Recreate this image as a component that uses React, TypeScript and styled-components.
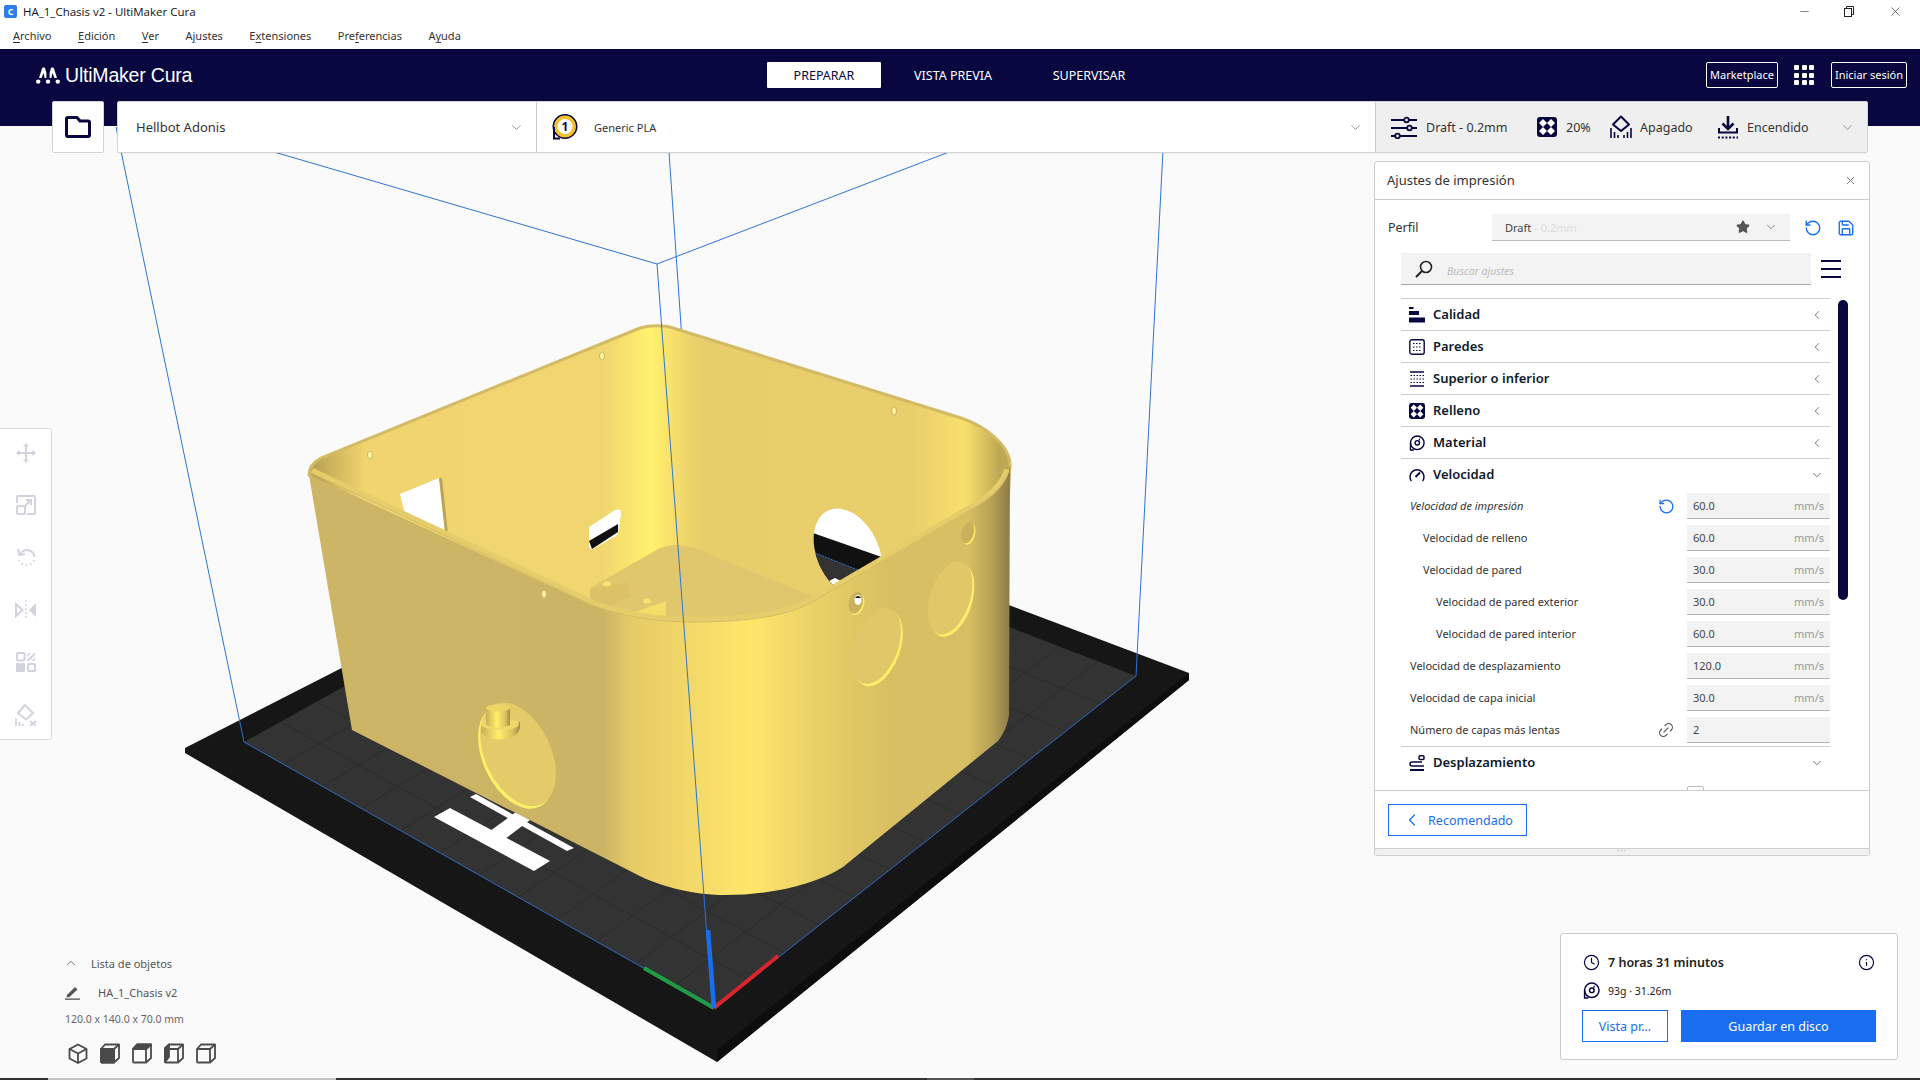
import React from "react";
import styled, { createGlobalStyle } from "styled-components";
import { ChevronDown, ChevronLeft, ChevronUp, X, Minus, RotateCcw, Save, Star, Link2, Clock, Info } from "lucide-react";

const NAVY = "#08073f";
const BLUE = "#196ef0";
const FONT = `"Noto Sans", "Open Sans", sans-serif`;

const GlobalStyle = createGlobalStyle`
  html, body { margin: 0; padding: 0; background: #fafafa; }
  body { font-family: ${FONT}; color: #2a2a2a; }
  * { box-sizing: border-box; }
`;

const Page = styled.div`
  position: relative;
  width: 1920px;
  height: 1080px;
  overflow: hidden;
  background: #fafafa;
  display: flex;
  flex-direction: column;
`;

const SceneSvg = styled.svg`
  position: absolute;
  inset: 0;
`;

const TitleBar = styled.div`
  position: relative;
  height: 22px;
  background: #fff;
  display: flex;
  align-items: center;
  padding-left: 4px;
  font-family: "Open Sans", sans-serif;
  font-size: 11.5px;
  color: #111;
`;

const AppIcon = styled.div`
  width: 13px;
  height: 13px;
  border-radius: 2px;
  background: #2f7de8;
  color: #fff;
  font-size: 9px;
  font-weight: 700;
  line-height: 13px;
  text-align: center;
  margin-right: 6px;
`;

const WindowButtons = styled.div`
  margin-left: auto;
  display: flex;
  align-items: center;
  padding-right: 17.5px;
  gap: 33.5px;
  color: #222;
`;

const MenuBar = styled.div`
  position: relative;
  height: 27px;
  background: #fff;
  display: flex;
  align-items: center;
  gap: 26.5px;
  padding: 0 0 0 13px;
  font-size: 11px;
  color: #333;
  u { text-underline-offset: 2px; }
`;

const NavBar = styled.div`
  position: relative;
  z-index: 2;
  height: 77px;
  background: ${NAVY};
`;

const NavRow = styled.div`
  height: 52px;
  display: grid;
  grid-template-columns: 1fr auto 1fr;
  align-items: center;
`;

const Brand = styled.div`
  display: flex;
  align-items: center;
  gap: 5px;
  padding-left: 36px;
  color: #fff;
  font-family: "Liberation Sans", Arial, sans-serif;
  font-size: 19.5px;
  letter-spacing: -0.2px;
`;

const Tabs = styled.div`
  display: flex;
  align-items: center;
`;

const Tab = styled.div<{ $active?: boolean; $w: number }>`
  width: ${(p) => p.$w}px;
  height: 26px;
  line-height: 27px;
  text-align: center;
  font-size: 12.5px;
  border-radius: 1px;
  background: ${(p) => (p.$active ? "#fff" : "transparent")};
  color: ${(p) => (p.$active ? NAVY : "#fff")};
`;

const NavRight = styled.div`
  display: flex;
  align-items: center;
  justify-content: flex-end;
  padding-right: 13px;
`;

const NavButton = styled.div<{ $w: number }>`
  width: ${(p) => p.$w}px;
  height: 26px;
  border: 1px solid #fff;
  border-radius: 2px;
  color: #fff;
  font-size: 11px;
  line-height: 24px;
  text-align: center;
`;

const AppsGrid = styled.div`
  width: 20px;
  margin: 0 17px 0 16px;
  display: grid;
  grid-template-columns: repeat(3, 5px);
  grid-auto-rows: 5px;
  gap: 2.5px;
  i { background: #fff; border-radius: 1px; display: block; }
`;

const ConfigRow = styled.div`
  display: flex;
  height: 52px;
  padding-left: 52px;
`;

const FolderButton = styled.div`
  width: 52px;
  background: #fff;
  border: 1px solid #d4d4d4;
  border-radius: 2px;
  display: flex;
  align-items: center;
  justify-content: center;
  margin-right: 13px;
`;

const ConfigPanel = styled.div`
  display: flex;
  width: 1751px;
  border: 1px solid #d4d4d4;
  border-radius: 2px;
  background: #fff;
  box-shadow: 0 1px 1px rgba(0, 0, 0, 0.05);
`;

const MachineCell = styled.div<{ $w: number }>`
  width: ${(p) => p.$w}px;
  display: flex;
  align-items: center;
  border-right: 1px solid #ccc;
  color: #333;
`;

const MachineName = styled.span`
  font-size: 13px;
  margin-left: 18px;
`;

const BadgeSlot = styled.span`
  display: flex;
  margin-left: 14px;
`;

const MaterialName = styled.span`
  font-size: 11px;
  margin-left: 15px;
`;

const Caret = styled.span`
  margin-left: auto;
  margin-right: 12px;
  display: flex;
  color: #777;
`;

const PrintCell = styled.div`
  flex: 1;
  background: #efefef;
  display: flex;
  align-items: center;
  padding-left: 15px;
  font-size: 12.5px;
  color: #333;
`;

const PrintItem = styled.div<{ $w: number; $gap: number }>`
  width: ${(p) => p.$w}px;
  display: flex;
  align-items: center;
  gap: ${(p) => p.$gap}px;
  white-space: nowrap;
`;

const Spacer = styled.div`
  flex: 1;
`;

const BottomStrip = styled.div`
  position: relative;
  height: 2px;
  display: flex;
  background: #333;
`;

const StripPart = styled.div<{ $left: number; $w: number; $c: string }>`
  margin-left: ${(p) => p.$left}px;
  width: ${(p) => p.$w}px;
  background: ${(p) => p.$c};
`;

const ToolBar = styled.div`
  position: absolute;
  left: 0;
  top: 428px;
  width: 52px;
  height: 312px;
  background: #fff;
  border: 1px solid #dcdcdc;
  border-left: none;
  border-radius: 0 3px 3px 0;
  display: flex;
  flex-direction: column;
  align-items: center;
  padding: 14px 0 13px 0;
  justify-content: space-between;
  color: #d3d3df;
`;

const ObjectList = styled.div`
  position: absolute;
  left: 64px;
  top: 951px;
  font-size: 11px;
  color: #666;
`;

const ObjectHead = styled.div`
  display: flex;
  align-items: center;
  height: 24px;
  gap: 13px;
  color: #555;
`;

const ObjectName = styled.div`
  display: flex;
  align-items: center;
  height: 34px;
  gap: 18px;
  margin-left: 1px;
  color: #555;
`;

const ObjectSize = styled.div`
  height: 20px;
  line-height: 20px;
  margin-left: 1px;
  font-size: 10.5px;
`;

const ViewButtons = styled.div`
  display: flex;
  gap: 12px;
  margin-top: 14px;
  margin-left: 4px;
`;

const SettingsPanel = styled.div`
  position: absolute;
  left: 1374px;
  top: 161px;
  width: 496px;
  height: 695px;
  background: #fff;
  border: 1px solid #ccc;
  border-radius: 3px;
  display: flex;
  flex-direction: column;
`;

const PanelTitle = styled.div`
  height: 38px;
  flex: none;
  display: flex;
  align-items: center;
  justify-content: space-between;
  padding: 0 12px 1px 12px;
  border-bottom: 1px solid #ccc;
  font-size: 13px;
  color: #333;
`;

const ProfileRow = styled.div`
  display: flex;
  align-items: center;
  height: 27px;
  margin-top: 14px;
  padding-left: 13px;
  flex: none;
`;

const ProfileLabel = styled.div`
  width: 104px;
  font-size: 12.5px;
  color: #333;
`;

const ProfileSelect = styled.div`
  width: 298px;
  height: 27px;
  background: #f3f3f3;
  border-bottom: 1px solid #bbb;
  display: flex;
  align-items: center;
  padding: 0 12px 0 13px;
  font-size: 11px;
  color: #444;
`;

const Faded = styled.span`
  color: #dcdcdc;
  margin-left: 3px;
`;

const ProfileCaret = styled.span`
  margin-left: auto;
  display: flex;
  align-items: center;
  gap: 14px;
  color: #666;
`;

const ProfileActions = styled.div`
  display: flex;
  gap: 15px;
  margin-left: 14px;
  color: ${BLUE};
`;

const SearchRow = styled.div`
  display: flex;
  align-items: center;
  height: 32px;
  margin-top: 12px;
  padding-left: 26px;
  flex: none;
`;

const SearchBox = styled.div`
  width: 410px;
  height: 32px;
  background: #f3f3f3;
  border-bottom: 1px solid #aaa;
  display: flex;
  align-items: center;
  padding-left: 14px;
  gap: 14px;
  font-size: 10.5px;
  font-style: italic;
  color: #bbb;
`;

const SearchHint = styled.span`
  padding-top: 4px;
`;

const Burger = styled.div`
  width: 20px;
  height: 18px;
  margin-left: 10px;
  display: flex;
  flex-direction: column;
  justify-content: space-between;
  i { height: 2px; background: ${NAVY}; display: block; }
`;

const ListArea = styled.div`
  flex: 1;
  min-height: 0;
  margin-top: 13px;
  padding-left: 26px;
  display: flex;
  overflow: hidden;
`;

const List = styled.div`
  width: 429px;
  flex: none;
`;

const ScrollThumb = styled.div`
  width: 10px;
  height: 300px;
  margin: 2px 0 0 8px;
  border-radius: 5px;
  background: ${NAVY};
`;

const CategoryRow = styled.div`
  height: 32px;
  border-top: 1px solid #d0d0d0;
  display: flex;
  align-items: center;
  padding-left: 8px;
  gap: 8px;
  font-size: 13px;
  font-weight: 600;
  color: #0d1a2a;
`;

const CategoryName = styled.span`
  padding-bottom: 2px;
`;

const CategoryCaret = styled.span`
  margin-left: auto;
  margin-right: 6px;
  display: flex;
  color: #555;
`;

const SettingRow = styled.div<{ $depth: number }>`
  height: 32px;
  display: flex;
  align-items: center;
  padding-left: ${(p) => 9 + p.$depth * 13}px;
  font-size: 11px;
  color: #333;
`;

const SettingLabel = styled.div<{ $changed?: boolean }>`
  flex: 1;
  padding-bottom: 2px;
  font-style: ${(p) => (p.$changed ? "italic" : "normal")};
`;

const RowAction = styled.div<{ $c: string }>`
  display: flex;
  margin-right: 12px;
  color: ${(p) => p.$c};
`;

const ChainIcon = styled(Link2)`
  transform: rotate(-45deg);
`;

const Field = styled.div`
  width: 143px;
  height: 26px;
  background: #f3f3f3;
  border-bottom: 1px solid #b5b5b5;
  display: flex;
  align-items: center;
  justify-content: space-between;
  padding: 0 6px;
  font-size: 11px;
  color: #444;
`;

const Unit = styled.span`
  color: #999;
`;

const CheckBox = styled.div`
  width: 17px;
  height: 17px;
  margin-right: 126px;
  border: 1px solid #bbb;
  border-radius: 2px;
  background: #fff;
`;

const PanelFooter = styled.div`
  height: 58px;
  flex: none;
  border-top: 1px solid #ccc;
  padding: 13px 0 0 13px;
`;

const OutlineButton = styled.div<{ $w: number }>`
  width: ${(p) => p.$w}px;
  height: 32px;
  border: 1px solid ${BLUE};
  display: flex;
  align-items: center;
  justify-content: center;
  gap: 6px;
  color: ${BLUE};
  font-size: 12.5px;
  background: #fff;
`;

const ResizeHandle = styled.div`
  height: 7px;
  flex: none;
  background: #f0f0f0;
  border-top: 1px solid #ccc;
  color: #aaa;
  font-size: 8px;
  line-height: 3px;
  text-align: center;
  letter-spacing: 1px;
`;

const StatsPanel = styled.div`
  position: absolute;
  left: 1560px;
  top: 933px;
  width: 338px;
  height: 127px;
  background: #fff;
  border: 1px solid #ccc;
  border-radius: 3px;
  padding: 16px 20px 0 21px;
`;

const StatRow = styled.div<{ $bold?: boolean; $h: number }>`
  display: flex;
  align-items: center;
  height: ${(p) => p.$h}px;
  gap: 8px;
  margin-left: 1px;
  color: #222;
  font-size: ${(p) => (p.$bold ? 12.5 : 10.5)}px;
  font-weight: ${(p) => (p.$bold ? 600 : 400)};
`;

const InfoSlot = styled.span`
  margin-left: auto;
  margin-right: 2px;
  display: flex;
  color: ${NAVY};
`;

const NavyIcon = styled.span`
  display: flex;
  color: ${NAVY};
`;

const StatButtons = styled.div`
  display: flex;
  gap: 13px;
  margin-top: 3px;
`;

const PrimaryButton = styled.div`
  width: 195px;
  height: 32px;
  line-height: 33px;
  text-align: center;
  background: ${BLUE};
  color: #fff;
  font-size: 12.5px;
`;

type IconProps = { size?: number };

const LogoMark = () => (
  <svg width="24" height="17" viewBox="0 0 24 17" fill="#fff">
    <circle cx="2.2" cy="14.6" r="2.2" />
    <circle cx="21.8" cy="14.6" r="2.2" />
    <circle cx="12" cy="14.6" r="2.2" />
    <path d="M3 11 L6 1.5 C6.4 0.2 8.8 0.2 9.2 1.5 L10.4 6 V11 H8.6 L7.6 6 L5.6 11 Z" />
    <path d="M21 11 L18 1.5 C17.6 0.2 15.2 0.2 14.8 1.5 L13.6 6 V11 H15.4 L16.4 6 L18.4 11 Z" />
  </svg>
);

const FolderIcon = () => (
  <svg width="26" height="22" viewBox="0 0 26 22" fill="none" stroke={NAVY} strokeWidth="3" strokeLinejoin="round">
    <path d="M1.5 3 Q1.5 1.5 3 1.5 H12 L15 5 H23 Q24.5 5 24.5 6.5 V19 Q24.5 20.5 23 20.5 H3 Q1.5 20.5 1.5 19 Z" />
  </svg>
);

const ExtruderBadge = () => (
  <svg width="28" height="28" viewBox="0 0 28 28">
    <circle cx="14" cy="13.5" r="11.5" fill="#fff" stroke={NAVY} strokeWidth="2" />
    <circle cx="14" cy="13.5" r="9.2" fill="none" stroke="#f2c230" strokeWidth="3.4" />
    <path d="M3 14 V25.5 H9" fill="none" stroke={NAVY} strokeWidth="2" />
    <text x="14" y="18" textAnchor="middle" fontSize="12" fontWeight="700" fontFamily="Noto Sans" fill={NAVY}>1</text>
  </svg>
);

const SlidersIcon = () => (
  <svg width="26" height="23" viewBox="0 0 26 23" fill="none" stroke={NAVY} strokeWidth="1.8">
    <path d="M0 4 H13 M18 4 H26 M0 12 H16 M21 12 H26 M0 20 H4 M9 20 H26" />
    <circle cx="15.5" cy="4" r="2.3" /><circle cx="18.5" cy="12" r="2.3" /><circle cx="6.5" cy="20" r="2.3" />
  </svg>
);

const InfillIcon = ({ size = 20 }: IconProps) => (
  <svg width={size} height={size} viewBox="0 0 20 20">
    <rect width="20" height="20" rx="3" fill={NAVY} />
    <path d="M6 2 L10 6 L6 10 L2 6 Z M14 2 L18 6 L14 10 L10 6 Z M6 10 L10 14 L6 18 L2 14 Z M14 10 L18 14 L14 18 L10 14 Z" fill="#fff" />
  </svg>
);

const SupportIcon = () => (
  <svg width="22" height="24" viewBox="0 0 22 24" fill="none" stroke={NAVY} strokeWidth="2">
    <path d="M11 1.5 L19 9.5 L11 16 L3 9.5 Z" strokeLinejoin="round" />
    <path d="M1 23 V13 M4.5 23 V17 M8 23 V20 M14 23 V20 M17.5 23 V17 M21 23 V13" strokeWidth="1.6" />
  </svg>
);

const AdhesionIcon = () => (
  <svg width="20" height="23" viewBox="0 0 20 23" fill="none" stroke={NAVY}>
    <path d="M10 0 V12" strokeWidth="2.6" />
    <path d="M4.5 7.5 L10 13 L15.5 7.5" strokeWidth="2.6" />
    <path d="M1 12 V16.5 H19 V12" strokeWidth="2" />
    <path d="M0 21.5 H20" strokeWidth="1.8" strokeDasharray="2 1.7" />
  </svg>
);

const QualityIcon = () => (
  <svg width="16" height="16" viewBox="0 0 16 16" fill={NAVY}>
    <rect y="0" width="4.5" height="2" /><rect y="4" width="10" height="4" /><rect y="10.5" width="16" height="5" />
  </svg>
);

const WallsIcon = () => (
  <svg width="16" height="16" viewBox="0 0 16 16" fill="none" stroke={NAVY}>
    <rect x="0.8" y="0.8" width="14.4" height="14.4" rx="2" strokeWidth="1.4" />
    <path d="M4 4.5 H12.5 M4 8 H12.5 M4 11.5 H12.5" strokeWidth="1.2" strokeDasharray="1.5 1.5" />
  </svg>
);

const TopBottomIcon = () => (
  <svg width="16" height="16" viewBox="0 0 16 16" fill="none" stroke={NAVY}>
    <path d="M1 1 H15 M1 15 H15" strokeWidth="1.4" />
    <path d="M1.5 4.5 H15 M1.5 8 H15 M1.5 11.5 H15" strokeWidth="1.2" strokeDasharray="1.5 1.5" />
  </svg>
);

const SpoolIcon = ({ size = 16 }: IconProps) => (
  <svg width={size} height={size} viewBox="0 0 16 16" fill="none" stroke={NAVY}>
    <circle cx="8.3" cy="7.8" r="6.8" strokeWidth="1.4" />
    <circle cx="8.3" cy="7.8" r="2.2" strokeWidth="1.4" />
    <path d="M1.5 8 V15 H5" strokeWidth="1.4" />
    <path d="M10 5.5 L10.8 3.5" strokeWidth="1.2" />
  </svg>
);

const SpeedIcon = () => (
  <svg width="16" height="16" viewBox="0 0 16 16" fill="none" stroke={NAVY} strokeWidth="1.5">
    <path d="M2.4 14 A7 7 0 1 1 13.6 14" />
    <path d="M6.5 10 L11 5.5" strokeWidth="1.9" />
  </svg>
);

const TravelIcon = () => (
  <svg width="16" height="16" viewBox="0 0 16 16" fill="none" stroke={NAVY} strokeWidth="1.5">
    <rect x="10" y="0.8" width="5" height="3.6" rx="1" />
    <path d="M13 7 H3 Q1 7 1 9 Q1 11 3 11 H15" />
    <path d="M1 15 H15" strokeWidth="2" />
  </svg>
);

const LensIcon = () => (
  <svg width="18" height="18" viewBox="0 0 18 18" fill="none" stroke="#222" strokeWidth="1.6">
    <circle cx="11" cy="7" r="5.5" />
    <path d="M7 11 L1 17" strokeWidth="1.9" />
  </svg>
);

const PencilIcon = () => (
  <svg width="15" height="15" viewBox="0 0 15 15" fill="#555">
    <path d="M2 10 L10 2 L12.5 4.5 L4.5 12 L1.5 12.5 Z" />
    <rect y="13.5" width="15" height="1.3" />
  </svg>
);

const WinRestore = () => (
  <svg width="10" height="11" viewBox="0 0 10 11" fill="none" stroke="#222">
    <rect x="0.5" y="2.5" width="7" height="8" /><path d="M2.5 2.5 V0.5 H9.5 V8.5 H7.5" />
  </svg>
);

const MoveTool = () => (
  <svg width="20" height="20" viewBox="0 0 20 20" fill="currentColor">
    <path d="M10 0 L13 3.6 H11 V9 H16.4 V7 L20 10 L16.4 13 V11 H11 V16.4 H13 L10 20 L7 16.4 H9 V11 H3.6 V13 L0 10 L3.6 7 V9 H9 V3.6 H7 Z" />
  </svg>
);

const ScaleTool = () => (
  <svg width="20" height="20" viewBox="0 0 20 20" fill="none" stroke="currentColor" strokeWidth="2">
    <path d="M1 8 V2 Q1 1 2 1 H18 Q19 1 19 2 V18 Q19 19 18 19 H11" />
    <rect x="1" y="11" width="8" height="8" rx="1" />
    <path d="M9 11 L15 5 M10 5 H15 V10" />
  </svg>
);

const RotateTool = () => (
  <svg width="20" height="20" viewBox="0 0 20 20" fill="none" stroke="currentColor" strokeWidth="2">
    <path d="M4 8 A7.5 7.5 0 0 1 18.5 10" />
    <path d="M2 2 L3.5 8 L9 7" />
    <path d="M18 13 A8 8 0 0 1 3 13" strokeDasharray="1.5 3" />
  </svg>
);

const MirrorTool = () => (
  <svg width="22" height="20" viewBox="0 0 22 20" fill="currentColor">
    <path d="M11 0 V20" stroke="currentColor" strokeWidth="1.4" strokeDasharray="2 2" />
    <path d="M1 4 L7.5 10 L1 16 Z" fill="none" stroke="currentColor" strokeWidth="2" />
    <path d="M21 3 L14 10 L21 17 Z" />
  </svg>
);

const PerModelTool = () => (
  <svg width="20" height="20" viewBox="0 0 20 20" fill="currentColor">
    <rect x="1" y="1" width="7.5" height="7.5" rx="1" fill="none" stroke="currentColor" strokeWidth="2" />
    <path d="M11 8 L18 1 H19 V3 L13 9 H11 Z M11 3 L13 1 H15 L11 5 Z M19 5 V8 Q19 9 18 9 H16 Z" />
    <rect x="0" y="11" width="9" height="9" rx="1" />
    <rect x="12" y="12" width="7" height="7" rx="1" fill="none" stroke="currentColor" strokeWidth="2" />
  </svg>
);

const BlockerTool = () => (
  <svg width="22" height="22" viewBox="0 0 22 22" fill="none" stroke="currentColor" strokeWidth="2">
    <path d="M10 1 L18 9 L11 15.5 L3 9 Z" strokeLinejoin="round" />
    <path d="M1 22 V14 M4.5 22 V18 M8 22 V20" strokeWidth="1.6" />
    <path d="M15 17 L21 22 M21 17 L15 22" strokeWidth="1.8" />
  </svg>
);

// the five camera presets, only the filled face differs
const CubeView = ({ face }: { face?: "front" | "top" | "left" | "iso" }) => (
  <svg width="20" height="21" viewBox="0 0 20 21" stroke="#4a4a4a" strokeWidth="1.8" strokeLinejoin="round" fill="none">
    {face === "iso" ? (
      <>
        <path d="M10 1.5 L18.5 6 V15.5 L10 20 L1.5 15.5 V6 Z" />
        <path d="M1.5 6 L10 10.5 L18.5 6 M10 10.5 V20" />
      </>
    ) : (
      <>
        <path d="M5 1.5 H19 V15 L14 19.5 H2 Q1 19.5 1 18.5 V6 Z" />
        {face === "front" && <path d="M1 6 H14 V19.5 H2 Q1 19.5 1 18.5 Z" fill="#4a4a4a" />}
        {face === "top" && <path d="M5 1.5 H19 L14 6 H1 Z" fill="#4a4a4a" />}
        {face === "left" && <path d="M1 5 L5 1.5 V14 L1 19 Z" fill="#4a4a4a" />}
        <path d="M1 6 H14 V19.5 M14 6 L19 1.5" />
      </>
    )}
  </svg>
);

const lerp = (a: number[], b: number[], t: number) => [a[0] + (b[0] - a[0]) * t, a[1] + (b[1] - a[1]) * t];

// bed corners in page pixels: left, front, right, back
const BED = { a: [244, 742], b: [714, 1008], c: [1136, 676], d: [680, 500] };

const gridLines = () => {
  const out: number[][] = [];
  for (let i = 1; i < 12; i++) {
    const t = i / 12;
    const p = lerp(BED.a, BED.b, t);
    const q = lerp(BED.d, BED.c, t);
    out.push([p[0], p[1], q[0], q[1]]);
    const r = lerp(BED.a, BED.d, t);
    const s = lerp(BED.b, BED.c, t);
    out.push([r[0], r[1], s[0], s[1]]);
  }
  return out;
};

// dx/dy push the wall colour off the bright ellipse, so only a crescent of the cut stays lit
const frontHoles = [
  { cx: 516, cy: 757, rx: 33, ry: 55, rot: -25, dx: 3, dy: -1.5, fill: "#e5ca6a" },
  { cx: 878, cy: 648, rx: 22, ry: 40, rot: 20, dx: -2.5, dy: -1.5, fill: "#e2c768" },
  { cx: 952, cy: 600, rx: 20, ry: 38, rot: 18, dx: -2.5, dy: -1.5, fill: "#e2c768" },
  { cx: 969, cy: 534, rx: 6, ry: 11, rot: 15, dx: -1.5, dy: -1, fill: "#c8b05c" },
  { cx: 857, cy: 604, rx: 7, ry: 11, rot: 15, dx: -1.5, dy: -1, fill: "#c8b05c" },
];

const pins = [[602, 356], [894, 411], [370, 455], [544, 594]];

const FRONT_EDGE = "M312 473 L592 605 C620 615 650 622 690 622 C740 622 785 618 814 601 L975 507 C992 497 1003 485 1007 472";

const Scene = () => (
  <SceneSvg width="1920" height="1080" viewBox="0 0 1920 1080">
    <defs>
      <linearGradient id="backWall" gradientUnits="userSpaceOnUse" x1="309" y1="0" x2="1010" y2="0">
        <stop offset="0" stopColor="#b39c50" />
        <stop offset="0.03" stopColor="#cdb25c" />
        <stop offset="0.08" stopColor="#f0d470" />
        <stop offset="0.42" stopColor="#f1d670" />
        <stop offset="0.488" stopColor="#fff26c" />
        <stop offset="0.52" stopColor="#f7df6c" />
        <stop offset="0.558" stopColor="#e8cd6b" />
        <stop offset="0.86" stopColor="#e9ce6c" />
        <stop offset="0.936" stopColor="#f9e06c" />
        <stop offset="0.986" stopColor="#bda754" />
      </linearGradient>
      <linearGradient id="frontWall" gradientUnits="userSpaceOnUse" x1="309" y1="0" x2="1010" y2="0">
        <stop offset="0" stopColor="#cdb566" />
        <stop offset="0.42" stopColor="#ccb465" />
        <stop offset="0.46" stopColor="#e6cb66" />
        <stop offset="0.63" stopColor="#ffe66a" />
        <stop offset="0.73" stopColor="#e8cf66" />
        <stop offset="0.83" stopColor="#d8bf63" />
        <stop offset="0.94" stopColor="#d8bf63" />
        <stop offset="0.975" stopColor="#b5a055" />
        <stop offset="1" stopColor="#8c7c48" />
      </linearGradient>
      <linearGradient id="post">
        <stop offset="0" stopColor="#c9b058" />
        <stop offset="0.45" stopColor="#fff06a" />
        <stop offset="0.8" stopColor="#dcc262" />
        <stop offset="1" stopColor="#a08c4c" />
      </linearGradient>
      <clipPath id="backHole">
        <ellipse cx="848" cy="553" rx="31" ry="47" transform="rotate(-25 848 553)" />
      </clipPath>
    </defs>

    {/* plate */}
    <polygon points="185,748 696,487 1189,673 1189,680 717,1062 185,753" fill="#161616" />
    <polygon points="1189,673 1189,680 717,1062 717,1050" fill="#0d0d0d" />
    <polygon points="244,742 714,1008 1136,676 680,500" fill="#333" />
    {gridLines().map((l, i) => (
      <line key={i} x1={l[0]} y1={l[1]} x2={l[2]} y2={l[3]} stroke="#2b2b2b" strokeWidth="1" />
    ))}
    <polyline points="244,742 714,1008 1136,676" fill="none" stroke="#2f74d0" strokeWidth="0.9" />

    {/* H logo printed on the bed */}
    <g fill="#fff">
      <polygon points="434,817 450,808 550,861 534,871" />
      <polygon points="470,797 476,794 574,848 567,851" />
      <polygon points="490,831 505,839 530,820 516,812" />
    </g>

    {/* build volume, back lines */}
    <g stroke="#2f74d0" strokeWidth="1" fill="none">
      <line x1="116" y1="127" x2="244" y2="742" />
      <line x1="1163" y1="150" x2="1136" y2="676" />
      <line x1="274" y1="152" x2="657" y2="264" />
      <line x1="949" y1="152" x2="657" y2="264" />
      <line x1="669" y1="152" x2="682" y2="340" />
    </g>

    {/* interior */}
    <path
      d="M309 475 C309 466 315 461 321 458 L640 328 C650 325 665 325 673 328 L961 418 C985 426 1010 445 1010 465 L1005 560 L700 640 L420 560 Z"
      fill="url(#backWall)"
      stroke="#d3ba66"
      strokeWidth="3"
    />
    <polygon points="400,494 439,478 445,532 405,515" fill="#fff" />
    <polygon points="439,478 442,478 448,534 445,532" fill="#b7a45a" />
    <path d="M589 527 L615 510 Q622 508 621 514 L618 533 Q617 536 612 538 L593 549 Q589 550 589 545 Z" fill="#fff" />
    <path d="M589 541 L618 524 L618 532 L592 549 Z" fill="#111" />
    <g clipPath="url(#backHole)">
      <rect x="800" y="490" width="100" height="130" fill="#fff" />
      <polygon points="800,528.5 900,563.5 900,620 800,620" fill="#111" />
      <polygon points="800,547 858,570 830,597 800,597" fill="#333" />
      <line x1="800" y1="547" x2="858" y2="570" stroke="#2f74d0" strokeWidth="1" strokeDasharray="2 1" />
      <polygon points="829,581 835,578 845,583 833,590" fill="#fff" />
    </g>
    <path d="M660 548 Q677 542 694 548 L822 600 L700 640 L590 610 L590 588 Z" fill="#e0c66c" />
    <polygon points="590,590 628,582 630,596 607,606 590,604" fill="#dcc166" />
    <polygon points="635,612 666,601 666,618 640,618" fill="#f5de68" />
    <ellipse cx="607" cy="584" rx="4" ry="2.5" fill="#f8e46e" />
    <ellipse cx="647" cy="601" rx="4" ry="2.5" fill="#f8e46e" />

    {/* outside of the two near walls */}
    <path
      d="M309 475 L592 605 C620 615 650 622 690 622 C740 622 785 618 814 601 L975 507 C995 495 1008 480 1010 465 L1009 714 C1008 725 1003 735 998 741 L843 867 C815 885 770 895 725 895 C690 895 655 885 630 871 L352 730 Z"
      fill="url(#frontWall)"
    />
    {/* top face of the wall along the near rim */}
    <path d={FRONT_EDGE} transform="translate(0 -2.5)" fill="none" stroke="#e6cd6c" strokeWidth="5.5" />
    <path d={FRONT_EDGE} fill="none" stroke="#d0b95f" strokeWidth="0.8" />

    {frontHoles.map((h, i) => (
      <g key={i} transform={`rotate(${h.rot} ${h.cx} ${h.cy})`}>
        <ellipse cx={h.cx} cy={h.cy} rx={h.rx} ry={h.ry} fill="#fff06a" />
        <ellipse cx={h.cx + h.dx} cy={h.cy + h.dy} rx={h.rx} ry={h.ry} fill={h.fill} />
      </g>
    ))}
    <ellipse cx="858" cy="600" rx="3.5" ry="5" fill="#fff" />
    <path d="M855 598 Q858 594 861 598 Z" fill="#111" />

    {/* screw post seen through the lower hole */}
    <path d="M481 725 V733 Q490 741 505 739 Q518 737 520 728 V722 Z" fill="url(#post)" />
    <ellipse cx="500" cy="724" rx="19" ry="6" fill="#f0d868" />
    <path d="M486 708 V725 Q497 731 510 725 V708 Z" fill="url(#post)" />
    <ellipse cx="498" cy="708" rx="12" ry="3.5" fill="#eed566" />

    {pins.map((p, i) => (
      <ellipse key={i} cx={p[0]} cy={p[1]} rx="2.5" ry="4" fill="#fff4a0" stroke="#bda75a" strokeWidth="0.8" />
    ))}

    {/* near vertical of the build volume and axes */}
    <line x1="657" y1="264" x2="712" y2="1004" stroke="#2f74d0" strokeWidth="1" />
    <line x1="714" y1="1008" x2="644" y2="968" stroke="#1f9c45" strokeWidth="4" />
    <line x1="714" y1="1008" x2="778" y2="956" stroke="#d9252c" strokeWidth="4" />
    <line x1="714" y1="1008" x2="708" y2="930" stroke="#196ef0" strokeWidth="4.5" />
  </SceneSvg>
);

const categories: [React.ReactNode, string][] = [
  [<QualityIcon />, "Calidad"],
  [<WallsIcon />, "Paredes"],
  [<TopBottomIcon />, "Superior o inferior"],
  [<InfillIcon size={16} />, "Relleno"],
  [<SpoolIcon />, "Material"],
];

const speeds = [
  { label: "Velocidad de relleno", depth: 1, value: "60.0" },
  { label: "Velocidad de pared", depth: 1, value: "30.0" },
  { label: "Velocidad de pared exterior", depth: 2, value: "30.0" },
  { label: "Velocidad de pared interior", depth: 2, value: "60.0" },
  { label: "Velocidad de desplazamiento", depth: 0, value: "120.0" },
  { label: "Velocidad de capa inicial", depth: 0, value: "30.0" },
];

export default function App() {
  return (
    <>
      <GlobalStyle />
      <Page>
        <Scene />

        <TitleBar>
          <AppIcon>C</AppIcon>
          HA_1_Chasis v2 - UltiMaker Cura
          <WindowButtons>
            <Minus size={13} strokeWidth={1} />
            <WinRestore />
            <X size={15} strokeWidth={1} />
          </WindowButtons>
        </TitleBar>
        <MenuBar>
          <span><u>A</u>rchivo</span>
          <span><u>E</u>dición</span>
          <span><u>V</u>er</span>
          <span>A<u>j</u>ustes</span>
          <span>E<u>x</u>tensiones</span>
          <span>Pre<u>f</u>erencias</span>
          <span>A<u>y</u>uda</span>
        </MenuBar>

        <NavBar>
          <NavRow>
            <Brand><LogoMark />UltiMaker Cura</Brand>
            <Tabs>
              <Tab $active $w={114}>PREPARAR</Tab>
              <Tab $w={144}>VISTA PREVIA</Tab>
              <Tab $w={128}>SUPERVISAR</Tab>
            </Tabs>
            <NavRight>
              <NavButton $w={72}>Marketplace</NavButton>
              <AppsGrid>
                {Array.from({ length: 9 }).map((_, i) => <i key={i} />)}
              </AppsGrid>
              <NavButton $w={76}>Iniciar sesión</NavButton>
            </NavRight>
          </NavRow>
          <ConfigRow>
            <FolderButton><FolderIcon /></FolderButton>
            <ConfigPanel>
              <MachineCell $w={419}>
                <MachineName>Hellbot Adonis</MachineName>
                <Caret><ChevronDown size={15} strokeWidth={1.2} /></Caret>
              </MachineCell>
              <MachineCell $w={839}>
                <BadgeSlot><ExtruderBadge /></BadgeSlot>
                <MaterialName>Generic PLA</MaterialName>
                <Caret><ChevronDown size={15} strokeWidth={1.2} /></Caret>
              </MachineCell>
              <PrintCell>
                <PrintItem $w={146} $gap={9}><SlidersIcon />Draft - 0.2mm</PrintItem>
                <PrintItem $w={73} $gap={9}><InfillIcon />20%</PrintItem>
                <PrintItem $w={108} $gap={8}><SupportIcon />Apagado</PrintItem>
                <PrintItem $w={120} $gap={9}><AdhesionIcon />Encendido</PrintItem>
                <Caret><ChevronDown size={15} strokeWidth={1.2} /></Caret>
              </PrintCell>
            </ConfigPanel>
          </ConfigRow>
        </NavBar>

        <Spacer />
        <BottomStrip>
          <StripPart $left={48} $w={288} $c="#c4c4c4" />
          <StripPart $left={591} $w={47} $c="#555" />
        </BottomStrip>

        <ToolBar>
          <MoveTool />
          <ScaleTool />
          <RotateTool />
          <MirrorTool />
          <PerModelTool />
          <BlockerTool />
        </ToolBar>

        <ObjectList>
          <ObjectHead>
            <ChevronUp size={14} strokeWidth={1.4} />
            Lista de objetos
          </ObjectHead>
          <ObjectName><PencilIcon />HA_1_Chasis v2</ObjectName>
          <ObjectSize>120.0 x 140.0 x 70.0 mm</ObjectSize>
          <ViewButtons>
            <CubeView face="iso" />
            <CubeView face="front" />
            <CubeView face="top" />
            <CubeView face="left" />
            <CubeView />
          </ViewButtons>
        </ObjectList>

        <SettingsPanel>
          <PanelTitle>
            Ajustes de impresión
            <X size={13} strokeWidth={1.4} color="#555" />
          </PanelTitle>
          <ProfileRow>
            <ProfileLabel>Perfil</ProfileLabel>
            <ProfileSelect>
              Draft<Faded>- 0.2mm</Faded>
              <ProfileCaret>
                <Star size={14} fill="#555" color="#555" />
                <ChevronDown size={14} strokeWidth={1.3} />
              </ProfileCaret>
            </ProfileSelect>
            <ProfileActions>
              <RotateCcw size={18} strokeWidth={1.8} />
              <Save size={18} strokeWidth={1.8} />
            </ProfileActions>
          </ProfileRow>
          <SearchRow>
            <SearchBox>
              <LensIcon />
              <SearchHint>Buscar ajustes</SearchHint>
            </SearchBox>
            <Burger><i /><i /><i /></Burger>
          </SearchRow>
          <ListArea>
            <List>
              {categories.map(([icon, name]) => (
                <CategoryRow key={name}>
                  {icon}
                  <CategoryName>{name}</CategoryName>
                  <CategoryCaret><ChevronLeft size={14} strokeWidth={1.4} /></CategoryCaret>
                </CategoryRow>
              ))}
              <CategoryRow>
                <SpeedIcon />
                <CategoryName>Velocidad</CategoryName>
                <CategoryCaret><ChevronDown size={14} strokeWidth={1.4} /></CategoryCaret>
              </CategoryRow>
              <SettingRow $depth={0}>
                <SettingLabel $changed>Velocidad de impresión</SettingLabel>
                <RowAction $c={BLUE}><RotateCcw size={17} strokeWidth={1.8} /></RowAction>
                <Field>60.0<Unit>mm/s</Unit></Field>
              </SettingRow>
              {speeds.map((s) => (
                <SettingRow key={s.label} $depth={s.depth}>
                  <SettingLabel>{s.label}</SettingLabel>
                  <Field>{s.value}<Unit>mm/s</Unit></Field>
                </SettingRow>
              ))}
              <SettingRow $depth={0}>
                <SettingLabel>Número de capas más lentas</SettingLabel>
                <RowAction $c="#555"><ChainIcon size={18} strokeWidth={1.5} /></RowAction>
                <Field>2</Field>
              </SettingRow>
              <CategoryRow>
                <TravelIcon />
                <CategoryName>Desplazamiento</CategoryName>
                <CategoryCaret><ChevronDown size={14} strokeWidth={1.4} /></CategoryCaret>
              </CategoryRow>
              <SettingRow $depth={0}>
                <SettingLabel>Habilitar retracción</SettingLabel>
                <CheckBox />
              </SettingRow>
            </List>
            <ScrollThumb />
          </ListArea>
          <PanelFooter>
            <OutlineButton $w={139}>
              <ChevronLeft size={20} strokeWidth={1.5} />
              Recomendado
            </OutlineButton>
          </PanelFooter>
          <ResizeHandle>···</ResizeHandle>
        </SettingsPanel>

        <StatsPanel>
          <StatRow $bold $h={24}>
            <NavyIcon><Clock size={17} strokeWidth={1.7} /></NavyIcon>
            7 horas 31 minutos
            <InfoSlot><Info size={17} strokeWidth={1.7} /></InfoSlot>
          </StatRow>
          <StatRow $h={33}>
            <SpoolIcon size={17} />
            93g · 31.26m
          </StatRow>
          <StatButtons>
            <OutlineButton $w={86}>Vista pr...</OutlineButton>
            <PrimaryButton>Guardar en disco</PrimaryButton>
          </StatButtons>
        </StatsPanel>
      </Page>
    </>
  );
}
